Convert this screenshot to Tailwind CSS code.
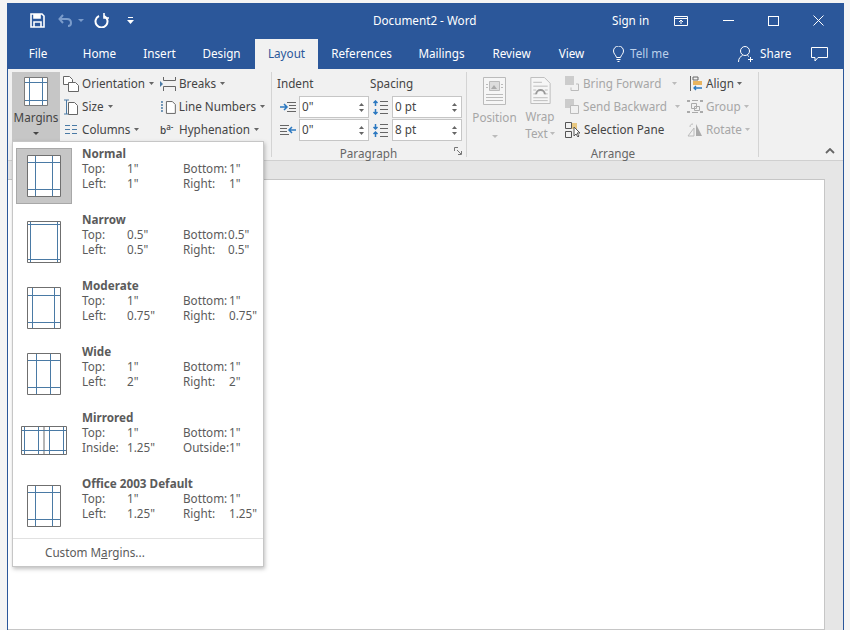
<!DOCTYPE html>
<html lang="en">
<head>
<meta charset="UTF-8">
<title>Document2 - Word</title>
<script src="https://cdn.jsdelivr.net/npm/@tailwindcss/browser@4"></script>
</head>
<body class="bg-[#f4f4f4] font-['Noto_Sans',sans-serif] text-[11.7px] text-[#444]">
<div class="relative w-[850px] h-[630px] overflow-hidden pt-[3px] pl-[7px] pr-[6px]">
  <div class="flex flex-col h-[627px] border-r border-l border-[#2b579a] bg-[#e6e6e6]">

    <!-- title bar -->
    <div class="h-[33px] bg-[#2b579a] text-white flex items-center pt-[2px] shrink-0 whitespace-nowrap">
      <div class="w-[604px] relative flex items-center h-full">
        <svg class="ml-[22px]" width="15" height="15" viewBox="0 0 15 15" fill="none" stroke="#fff" stroke-width="1.6"><path d="M1 1h11l2 2v11H1z"/><path d="M4 1v4h6V1" fill="#fff"/><path d="M4 14V9h7v5" /></svg>
        <svg class="ml-[13px]" width="15" height="13" viewBox="0 0 15 13" fill="none" stroke="#7b9ccb" stroke-width="2"><path d="M5 1L1.500 5 5 9"/><path d="M2 5h7c3 0 4 2 4 4s-1 3-3 3"/></svg>
        <svg class="ml-[5px]" width="6" height="4" viewBox="0 0 6 4" fill="#7b9ccb"><path d="M0 0h6L3 3z"/></svg>
        <svg class="ml-[10px]" width="15" height="15" viewBox="0 0 15 15" fill="none" stroke="#fff" stroke-width="2"><path d="M5 3a6 6 0 1 0 5 0"/><path d="M10 0v5h5" stroke-width="1.6"/></svg>
        <svg class="ml-[18px]" width="7" height="8" viewBox="0 0 7 8" fill="#fff"><path d="M1 0h5v1H1z"/><path d="M0 3h7L3.500 7z"/></svg>
        <span class="absolute left-[365px] top-[7px]">Document2 - Word</span>
      </div>
      <span>Sign in</span>
      <svg class="ml-[25px]" width="14" height="10" viewBox="0 0 14 10" fill="none" stroke="#fff"><path d="M.5.500h13v9H.500z"/><path d="M.5 2.500h13M7 8V4M5 6l2-2 2 2"/></svg>
      <div class="ml-[35px] w-[11px] h-px bg-white"></div>
      <div class="ml-[34px] w-[11px] h-[10px] border border-white"></div>
      <svg class="ml-[34px]" width="11" height="11" viewBox="0 0 11 11" stroke="#fff"><path d="M.5.500l10 10M10.500.500l-10 10"/></svg>
    </div>

    <!-- tabs -->
    <div class="h-[33px] bg-[#2b579a] text-white flex items-end shrink-0 whitespace-nowrap">
      <div class="flex items-center h-[30px] w-full text-center">
        <span class="w-[60px]">File</span>
        <span class="w-[63px]">Home</span>
        <span class="w-[57px]">Insert</span>
        <span class="w-[67px]">Design</span>
        <span class="h-[30px] w-[63px] bg-[#f1f1f1] text-[#2b579a] flex items-center justify-center">Layout</span>
        <span class="w-[87px]">References</span>
        <span class="w-[73px]">Mailings</span>
        <span class="w-[67px]">Review</span>
        <span class="w-[53px]">View</span>
        <svg class="ml-[15px]" width="11" height="16" viewBox="0 0 11 16" fill="none" stroke="#fff"><path d="M3.500 11.500C3 9 .5 8 .5 5a5 5 0 0 1 10 0c0 3-2.500 4-3 6.500zM3.500 13.500h4M4.500 15.500h2"/></svg>
        <span class="ml-[6px] w-[108px] text-left text-[#bcd0ea]">Tell me</span>
        <svg width="15" height="17" viewBox="0 0 15 17" fill="none" stroke="#fff"><circle cx="7" cy="5" r="4.500"/><path d="M.5 16c0-4 2-5.500 4-6.500M9.500 9.500l1.500 1M10 13.500h5M12.500 11v5"/></svg>
        <span class="ml-[7px] w-[51px] text-left">Share</span>
        <svg width="17" height="15" viewBox="0 0 17 15" fill="none" stroke="#fff"><path d="M.5.500h16v10H7L4 14v-3.500H.5z"/></svg>
      </div>
    </div>

    <!-- ribbon -->
    <div class="h-[92px] bg-[#f1f1f1] border-b border-[#d0d0d0] flex shrink-0 pt-[3px] pl-[4px] whitespace-nowrap">
      <!-- page setup -->
      <div class="w-[260px] h-[85px] border-r border-[#d4d4d4] flex">
        <div class="w-[48px] h-[69px] bg-[#c6c6c6] flex flex-col items-center pt-[5px]">
          <svg width="24" height="29" viewBox="0 0 24 29" fill="#fff" stroke="#7a7a7a"><path d="M.5.500h23v28H.500z"/><path stroke="#4a7aa5" d="M5.500 1v27M18.500 1v27M1 5.500h22M1 23.500h22"/></svg>
          <span class="mt-[3px] leading-[17px]">Margins</span>
          <svg class="mt-[6px]" width="6" height="4" viewBox="0 0 6 4" fill="#444"><path d="M0 0h6L3 3z"/></svg>
        </div>
        <div class="ml-[3px] w-[97px] flex flex-col gap-[6px] pt-[3px]">
          <div class="flex items-center h-[17px] gap-[3px]"><svg width="16" height="16" viewBox="0 0 16 16" fill="#fff" stroke="#666"><path d="M.5.500h6l3 3v5H.500z"/><path d="M5.500 6.500h7l3 3v6h-10z"/></svg>Orientation<svg class="ml-[1px]" width="5" height="3" fill="#666"><path d="M0 0h5L2.500 3z"/></svg></div>
          <div class="flex items-center h-[17px] gap-[3px]"><svg width="16" height="16" viewBox="0 0 16 16" fill="none" stroke="#666"><path stroke="#4a7aa5" d="M1 1h5M1 15h5M3.500 1v14"/><path fill="#fff" d="M5.500 3.500h6l3 3v9h-9z"/></svg>Size<svg class="ml-[1px]" width="5" height="3" fill="#666"><path d="M0 0h5L2.500 3z"/></svg></div>
          <div class="flex items-center h-[17px] gap-[3px]"><svg width="16" height="16" viewBox="0 0 16 16" fill="none" stroke="#4a7aa5"><path d="M2 3.500h5M2 7.500h5M2 11.500h5M9 3.500h5M9 7.500h5M9 11.500h5"/></svg>Columns<svg class="ml-[1px]" width="5" height="3" fill="#666"><path d="M0 0h5L2.500 3z"/></svg></div>
        </div>
        <div class="w-[105px] flex flex-col gap-[6px] pt-[3px]">
          <div class="flex items-center h-[17px] gap-[3px]"><svg width="16" height="16" viewBox="0 0 16 16" fill="none" stroke="#666"><path d="M3.500 1v3.500h12V1M3.500 15v-4.500h12V15"/><path d="M0 5l3 3-3 3z" fill="#4a7aa5" stroke="none"/></svg>Breaks<svg class="ml-[1px]" width="5" height="3" fill="#666"><path d="M0 0h5L2.500 3z"/></svg></div>
          <div class="flex items-center h-[17px] gap-[3px]"><svg width="16" height="16" viewBox="0 0 16 16" fill="#fff" stroke="#666"><path stroke="#4a7aa5" stroke-width="1.500" stroke-dasharray="2 1" d="M2 2v12" fill="none"/><path d="M6.500 2.500h6l3 3v9h-9z"/></svg>Line Numbers<svg class="ml-[1px]" width="5" height="3" fill="#666"><path d="M0 0h5L2.500 3z"/></svg></div>
          <div class="flex items-center h-[17px] gap-[3px]"><span class="w-[16px] text-[10px] font-medium leading-none">b<sup class="text-[8px]">a-</sup></span>Hyphenation<svg class="ml-[1px]" width="5" height="3" fill="#666"><path d="M0 0h5L2.500 3z"/></svg></div>
        </div>
      </div>

      <!-- paragraph -->
      <div class="w-[195px] h-[85px] border-r border-[#d4d4d4] relative pl-[5px]">
        <div class="flex h-[22px] items-center pt-[1px]"><span class="w-[93px]">Indent</span><span>Spacing</span></div>
        <div class="flex flex-col gap-[1px] mt-[2px]">
          <div class="flex items-center">
            <svg width="16" height="12" viewBox="0 0 16 12" fill="none" stroke="#666" class="ml-[3px]"><path d="M7 1.500h9M9 4.500h7M9 7.500h7M7 10.500h9"/><path stroke="#2b78c0" stroke-width="1.500" d="M0 6h7M4 3l3 3-3 3"/></svg>
            <div class="ml-[3px] w-[70px] h-[22px] bg-white border border-[#c6c6c6] flex items-center justify-between pl-[2px] pr-[4px] leading-none">0"<span class="flex flex-col gap-[3px]"><svg width="5" height="3" fill="#666"><path d="M0 3h5L2.500 0z"/></svg><svg width="5" height="3" fill="#666"><path d="M0 0h5L2.500 3z"/></svg></span></div>
            <svg width="16" height="15" viewBox="0 0 16 15" fill="none" stroke="#666" class="ml-[3px]"><path d="M8 1.500h8M8 5.500h8M8 9.500h8M8 13.500h8"/><path stroke="#2b78c0" stroke-width="1.500" d="M3.500 6V1M1.500 3l2-2 2 2M3.500 9v5M1.500 12l2 2 2-2"/></svg>
            <div class="ml-[4px] w-[70px] h-[22px] bg-white border border-[#c6c6c6] flex items-center justify-between pl-[2px] pr-[4px] leading-none">0 pt<span class="flex flex-col gap-[3px]"><svg width="5" height="3" fill="#666"><path d="M0 3h5L2.500 0z"/></svg><svg width="5" height="3" fill="#666"><path d="M0 0h5L2.500 3z"/></svg></span></div>
          </div>
          <div class="flex items-center">
            <svg width="16" height="12" viewBox="0 0 16 12" fill="none" stroke="#666" class="ml-[3px]"><path d="M0 1.500h9M0 4.500h7M0 7.500h7M0 10.500h9"/><path stroke="#2b78c0" stroke-width="1.500" d="M16 6H9M12 3L9 6l3 3"/></svg>
            <div class="ml-[3px] w-[70px] h-[22px] bg-white border border-[#c6c6c6] flex items-center justify-between pl-[2px] pr-[4px] leading-none">0"<span class="flex flex-col gap-[3px]"><svg width="5" height="3" fill="#666"><path d="M0 3h5L2.500 0z"/></svg><svg width="5" height="3" fill="#666"><path d="M0 0h5L2.500 3z"/></svg></span></div>
            <svg width="16" height="15" viewBox="0 0 16 15" fill="none" stroke="#666" class="ml-[3px]"><path d="M8 1.500h8M8 5.500h8M8 9.500h8M8 13.500h8"/><path stroke="#2b78c0" stroke-width="1.500" d="M3.500 1v5M1.500 4l2 2 2-2M3.500 14V9M1.500 11l2-2 2 2"/></svg>
            <div class="ml-[4px] w-[70px] h-[22px] bg-white border border-[#c6c6c6] flex items-center justify-between pl-[2px] pr-[4px] leading-none">8 pt<span class="flex flex-col gap-[3px]"><svg width="5" height="3" fill="#666"><path d="M0 3h5L2.500 0z"/></svg><svg width="5" height="3" fill="#666"><path d="M0 0h5L2.500 3z"/></svg></span></div>
          </div>
        </div>
        <div class="text-center mt-[4px] text-[#666] pr-[6px]">Paragraph</div>
        <svg class="absolute right-[4px] bottom-[2px]" width="8" height="8" viewBox="0 0 8 8" fill="none" stroke="#777"><path d="M.5 4V.5H4M3 3l4 4M7.500 4v3.500H4"/></svg>
      </div>

      <!-- arrange -->
      <div class="w-[292px] h-[85px] border-r border-[#d4d4d4] relative text-[#a6a6a6]">
        <div class="flex h-[69px]">
          <div class="w-[45px] ml-[5px] flex flex-col items-center pt-[5px]">
            <svg width="23" height="28" viewBox="0 0 23 28" fill="#f6f6f6" stroke="#bbb"><path d="M.5.500h22v27H.500z"/><path d="M6.500 4.500h10v9h-10z" fill="#ddd"/><path d="M3 17.500h17M3 20.500h17M3 23.500h17M3 7.500h2M3 10.500h2M18 7.500h2M18 10.500h2"/><path d="M8 12l3-4 3 4z" fill="#aaa" stroke="none"/></svg>
            <span class="mt-[4px] leading-[17px]">Position</span>
            <svg class="mt-[9px]" width="6" height="4" viewBox="0 0 6 4" fill="#bbb"><path d="M0 0h6L3 3z"/></svg>
          </div>
          <div class="w-[28px] ml-[9px] flex flex-col items-center pt-[5px]">
            <svg width="21" height="28" viewBox="0 0 21 28" fill="#f6f6f6" stroke="#bbb"><path d="M.5.500h14l6 6v21H.500z"/><path d="M3 5.500h9M3 9.500h15M3 13.500h3M15 13.500h3M3 17.500h3M15 17.500h3M3 21.500h15M3 24.500h15"/><path d="M6 18c0-6 9-6 9 0" fill="none" stroke="#999" stroke-width="2"/></svg>
            <span class="mt-[4px] leading-[17px]">Wrap</span>
            <span class="leading-[16px] flex items-center gap-[2px]">Text<svg width="5" height="3" fill="#bbb"><path d="M0 0h5L2.500 3z"/></svg></span>
          </div>
          <div class="ml-[11px] w-[122px] flex flex-col gap-[6px] pt-[3px]">
            <div class="flex items-center h-[17px] gap-[3px]"><svg width="15" height="15" viewBox="0 0 15 15" fill="none" stroke="#bbb"><path d="M0 0h9v9H0z" fill="#ccc" stroke="none"/><path d="M6 11.500v3h7.500V8H11"/></svg>Bring Forward<svg class="ml-[8px]" width="5" height="3" fill="#bbb"><path d="M0 0h5L2.500 3z"/></svg></div>
            <div class="flex items-center h-[17px] gap-[3px]"><svg width="15" height="15" viewBox="0 0 15 15" fill="none" stroke="#bbb"><path d="M0 0h9v9H0z" fill="#ccc" stroke="none"/><path d="M5.500 6.500h8v8h-8z" fill="#f1f1f1"/></svg>Send Backward<svg class="ml-[5px]" width="5" height="3" fill="#bbb"><path d="M0 0h5L2.500 3z"/></svg></div>
            <div class="flex items-center h-[17px] gap-[3px] text-[#444]"><svg width="16" height="16" viewBox="0 0 16 16" fill="none" stroke="#555"><path d="M.5.500h6v6h-6zM.5 9.500h6v6h-6z"/><path d="M7 1h5v6H7z" fill="#e8c77f" stroke="none"/><path d="M9 5v9l2-2 2 3 1-1-2-3h3z" fill="#fff"/></svg>Selection Pane</div>
          </div>
          <div class="flex flex-col gap-[6px] pt-[3px]">
            <div class="flex items-center h-[17px] gap-[3px] text-[#444]"><svg class="ml-[3px]" width="13" height="15" viewBox="0 0 13 15" fill="none"><path d="M.5 0v15" stroke="#666"/><path d="M3 1h5v3H3z" stroke="#666"/><path d="M3 5h9v4H3z" fill="#e8b460"/><path d="M12 12H4M6 10l-2 2 2 2" stroke="#2b78c0" stroke-width="1.300"/></svg>Align<svg width="5" height="3" fill="#666"><path d="M0 0h5L2.500 3z"/></svg></div>
            <div class="flex items-center h-[17px] gap-[3px]"><svg width="16" height="15" viewBox="0 0 16 15" fill="none" stroke="#aaa"><path d="M0 1h3v2H0zM13 1h3v2h-3zM0 12h3v2H0zM13 12h3v2h-3z" fill="#aaa" stroke="none"/><path d="M4.500 4.500h5v5h-5zM7.500 7.500h5v4h-5zM5 1.500h6M5 13.500h6"/></svg>Group<svg width="5" height="3" fill="#bbb"><path d="M0 0h5L2.500 3z"/></svg></div>
            <div class="flex items-center h-[17px] gap-[3px]"><svg width="16" height="15" viewBox="0 0 16 15" fill="none" stroke="#bbb"><path d="M1 14l6-8v8z"/><path d="M9 2l6 12H9z" fill="#aaa" stroke="none"/><path d="M3 5c0-2 1-3 3-3" /></svg>Rotate<svg width="5" height="3" fill="#bbb"><path d="M0 0h5L2.500 3z"/></svg></div>
          </div>
        </div>
        <div class="absolute left-[0px] w-[292px] top-[73px] text-center text-[#666]">Arrange</div>
      </div>
      <div class="flex-1 relative">
        <svg class="absolute right-[8px] bottom-[6px]" width="10" height="6" viewBox="0 0 10 6" fill="none" stroke="#666" stroke-width="1.800"><path d="M1 5l4-4 4 4"/></svg>
      </div>
    </div>

    <!-- document area -->
    <div class="flex-1 pt-[18px] pr-[18px] flex">
      <div class="flex-1 bg-white border border-l-0 border-[#c6c6c6]"></div>
    </div>
  </div>

  <!-- margins dropdown -->
  <div class="absolute left-[12px] top-[141px] w-[252px] h-[426px] bg-white border border-[#c6c6c6] shadow-[1px_2px_4px_rgba(0,0,0,0.25)] text-[#5b5b5b] pt-[6px] leading-[15px] whitespace-nowrap">
    <div class="h-[66px] flex">
      <div class="ml-[3px] w-[56px] h-[56px] bg-[#c6c6c6] border border-[#a8a8a8] flex items-center justify-center">
        <svg width="34" height="42" viewBox="0 0 34 42" fill="#fff" stroke="#6f6f6f"><path d="M.5.500h33v41H.500z"/><path stroke="#4a7aa5" d="M8.500 1v40M25.500 1v40M1 7.500h32M1 34.500h32"/></svg>
      </div>
      <div class="ml-[10px] w-[176px] -mt-[2px]">
        <div class="font-bold">Normal</div>
        <div class="grid grid-cols-[45px_56px_46px_1fr]"><span>Top:</span><span>1"</span><span>Bottom:</span><span>1"</span><span>Left:</span><span>1"</span><span>Right:</span><span>1"</span></div>
      </div>
    </div>
    <div class="h-[66px] flex">
      <div class="ml-[3px] w-[56px] h-[56px] flex items-center justify-center">
        <svg width="34" height="42" viewBox="0 0 34 42" fill="#fff" stroke="#6f6f6f"><path d="M.5.500h33v41H.500z"/><path stroke="#4a7aa5" d="M3.500 1v40M30.500 1v40M1 3.500h32M1 38.500h32"/></svg>
      </div>
      <div class="ml-[10px] w-[176px] -mt-[2px]">
        <div class="font-bold">Narrow</div>
        <div class="grid grid-cols-[45px_56px_45px_1fr]"><span>Top:</span><span>0.5"</span><span>Bottom:</span><span>0.5"</span><span>Left:</span><span>0.5"</span><span>Right:</span><span>0.5"</span></div>
      </div>
    </div>
    <div class="h-[66px] flex">
      <div class="ml-[3px] w-[56px] h-[56px] flex items-center justify-center">
        <svg width="34" height="42" viewBox="0 0 34 42" fill="#fff" stroke="#6f6f6f"><path d="M.5.500h33v41H.500z"/><path stroke="#4a7aa5" d="M5.500 1v40M27.500 1v40M1 8.500h32M1 35.500h32"/></svg>
      </div>
      <div class="ml-[10px] w-[176px] -mt-[2px]">
        <div class="font-bold">Moderate</div>
        <div class="grid grid-cols-[45px_56px_46px_1fr]"><span>Top:</span><span>1"</span><span>Bottom:</span><span>1"</span><span>Left:</span><span>0.75"</span><span>Right:</span><span>0.75"</span></div>
      </div>
    </div>
    <div class="h-[66px] flex">
      <div class="ml-[3px] w-[56px] h-[56px] flex items-center justify-center">
        <svg width="34" height="42" viewBox="0 0 34 42" fill="#fff" stroke="#6f6f6f"><path d="M.5.500h33v41H.500z"/><path stroke="#4a7aa5" d="M9.500 1v40M23.500 1v40M1 7.500h32M1 34.500h32"/></svg>
      </div>
      <div class="ml-[10px] w-[176px] -mt-[2px]">
        <div class="font-bold">Wide</div>
        <div class="grid grid-cols-[45px_56px_46px_1fr]"><span>Top:</span><span>1"</span><span>Bottom:</span><span>1"</span><span>Left:</span><span>2"</span><span>Right:</span><span>2"</span></div>
      </div>
    </div>
    <div class="h-[66px] flex">
      <div class="ml-[3px] w-[56px] h-[56px] flex items-center justify-center">
        <svg width="46" height="29" viewBox="0 0 46 29" fill="#fff" stroke="#6f6f6f"><path d="M.5.500h45v28H.500zM23 1v27"/><path stroke="#4a7aa5" d="M3.500 1v27M17.500 1v27M28.500 1v27M42.500 1v27M1 4.500h44M1 24.500h44"/></svg>
      </div>
      <div class="ml-[10px] w-[176px] -mt-[2px]">
        <div class="font-bold">Mirrored</div>
        <div class="grid grid-cols-[45px_56px_46px_1fr]"><span>Top:</span><span>1"</span><span>Bottom:</span><span>1"</span><span>Inside:</span><span>1.25"</span><span>Outside:</span><span>1"</span></div>
      </div>
    </div>
    <div class="h-[60px] flex">
      <div class="ml-[3px] w-[56px] h-[56px] flex items-center justify-center">
        <svg width="34" height="42" viewBox="0 0 34 42" fill="#fff" stroke="#6f6f6f"><path d="M.5.500h33v41H.500z"/><path stroke="#4a7aa5" d="M8.500 1v40M25.500 1v40M1 7.500h32M1 34.500h32"/></svg>
      </div>
      <div class="ml-[10px] w-[176px] -mt-[2px]">
        <div class="font-bold">Office 2003 Default</div>
        <div class="grid grid-cols-[45px_56px_46px_1fr]"><span>Top:</span><span>1"</span><span>Bottom:</span><span>1"</span><span>Left:</span><span>1.25"</span><span>Right:</span><span>1.25"</span></div>
      </div>
    </div>
    <div class="border-t border-[#e1e1e1] h-[27px] flex items-center pl-[32px]"><span>Custom M<span class="underline">a</span>rgins...</span></div>
  </div>
</div>
</body>
</html>
